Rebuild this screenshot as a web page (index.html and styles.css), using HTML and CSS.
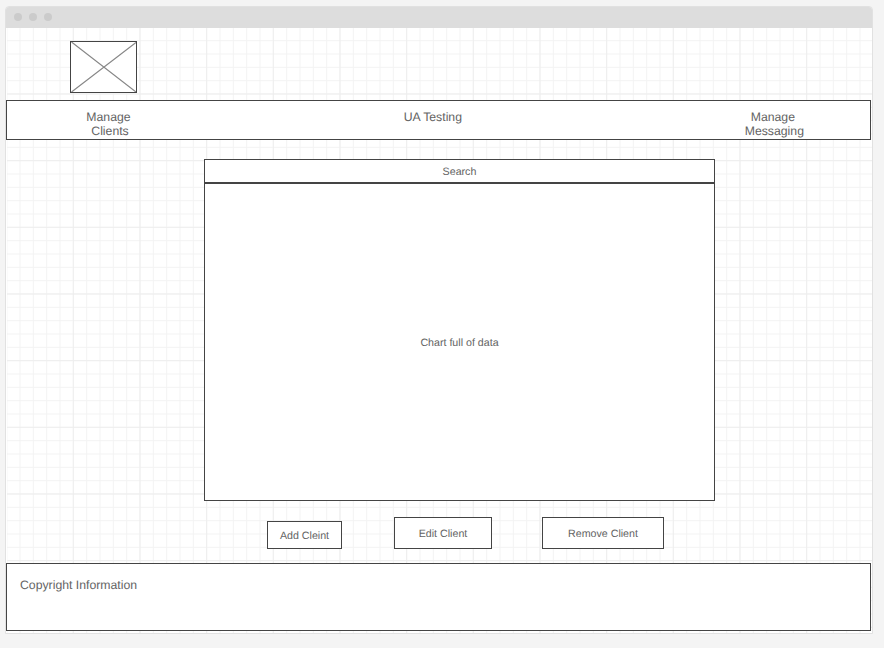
FILE: index.html
```html
<!DOCTYPE html>
<html lang="en">
<head>
<meta charset="utf-8">
<title>Manage Clients</title>
<link rel="stylesheet" href="styles.css">
</head>
<body>
<div class="window">
  <div class="titlebar"><span class="dot"></span><span class="dot"></span><span class="dot"></span></div>
  <main class="canvas">
    <svg class="grid" aria-hidden="true">
      <defs>
        <pattern id="cells" width="200" height="200" patternUnits="userSpaceOnUse">
          <path class="minor" d="M.67 0V200M14 0V200M27.33 0V200M40.67 0V200M54 0V200M67.33 0V200M80.67 0V200M94 0V200M107.33 0V200M120.67 0V200M134 0V200M147.33 0V200M160.67 0V200M174 0V200M187.33 0V200M0 12.67H200M0 26H200M0 39.33H200M0 52.67H200M0 66H200M0 79.33H200M0 92.67H200M0 106H200M0 119.33H200M0 132.67H200M0 146H200M0 159.33H200M0 172.67H200M0 186H200M0 199.33H200"/>
          <path class="major" d="M.67 0V200M67.33 0V200M134 0V200M0 66H200M0 132.67H200M0 199.33H200"/>
        </pattern>
      </defs>
      <rect x="1" width="100%" height="100%" fill="url(#cells)"/>
    </svg>
    <svg class="logo box" viewBox="0 0 65 50"><path d="M.5 0L65 50M65 .5L.5 50"/></svg>
    <nav class="nav box">
      <a class="clients"><span>Manage</span><span>Clients</span></a>
      <a class="testing">UA Testing</a>
      <a class="messaging"><span>Manage</span><span>Messaging</span></a>
    </nav>
    <div class="search box">Search</div>
    <section class="chart box">Chart full of data</section>
    <div class="actions">
      <div class="button add box">Add Cleint</div>
      <div class="button edit box">Edit Client</div>
      <div class="button remove box">Remove Client</div>
    </div>
    <footer class="footer box">Copyright Information</footer>
  </main>
</div>
</body>
</html>
```
FILE: styles.css
```css
* { box-sizing: border-box; }
body {
  margin: 0;
  padding: 6px 11px 14px 5px;
  height: 648px;
  background: #f4f4f4;
  color: #636363;
  font: 10.67px/14px "Liberation Sans", Arial, sans-serif;
  text-rendering: geometricPrecision;
}
.window {
  height: 628px;
  border: 1px solid #e1e1e1;
  border-radius: 4px 4px 0 0;
  background: #fff;
  overflow: hidden;
}
.titlebar {
  display: flex;
  align-items: center;
  gap: 7px;
  height: 21px;
  padding: 0 0 1px 8px;
  background: #ddd;
}
.dot {
  width: 8px;
  height: 8px;
  border-radius: 50%;
  background: #cbcbcb;
}
.canvas {
  position: relative;
  display: flex;
  flex-direction: column;
  height: 605px;
}
.grid {
  position: absolute;
  inset: 0;
  width: 100%;
  height: 100%;
}
.minor, .major { fill: none; stroke-width: 1; }
.minor { stroke: #f3f3f3; }
.major { stroke: #eee; }
.box {
  position: relative;
  flex: none;
  border: 1px solid #444;
  background: #fff;
}
.logo {
  width: 67px;
  height: 52px;
  margin: 13px 0 0 64px;
}
.logo path { fill: none; stroke: #888; stroke-width: 1.2; }
.nav {
  display: grid;
  grid-template-columns: 1fr 1fr 1fr;
  width: 865px;
  height: 40px;
  margin-top: 7px;
  padding-top: 9px;
  font-size: 12.25px;
}
.nav a { display: flex; flex-direction: column; }
.clients { padding-left: 79.3px; }
.clients span + span { padding-left: 5px; }
.testing { padding-left: 109px; }
.messaging { padding-left: 162.4px; }
.messaging span:first-child { padding-left: 6px; }
.search, .chart {
  display: flex;
  align-items: center;
  justify-content: center;
  width: 511px;
  margin-left: 198px;
  padding-top: 2px;
}
.search { height: 24px; margin-top: 19px; }
.chart { height: 318px; }
.actions {
  display: flex;
  align-items: flex-end;
  height: 48px;
  padding-left: 261px;
}
.button {
  display: flex;
  align-items: center;
  justify-content: center;
  padding-top: 2px;
}
.add { width: 75px; height: 28px; }
.edit { width: 98px; height: 32px; margin-left: 52px; }
.remove { width: 122px; height: 32px; margin-left: 50px; }
.footer {
  width: 865px;
  height: 68px;
  margin-top: 14px;
  padding: 14px 13px;
  font-size: 12.25px;
}
```
